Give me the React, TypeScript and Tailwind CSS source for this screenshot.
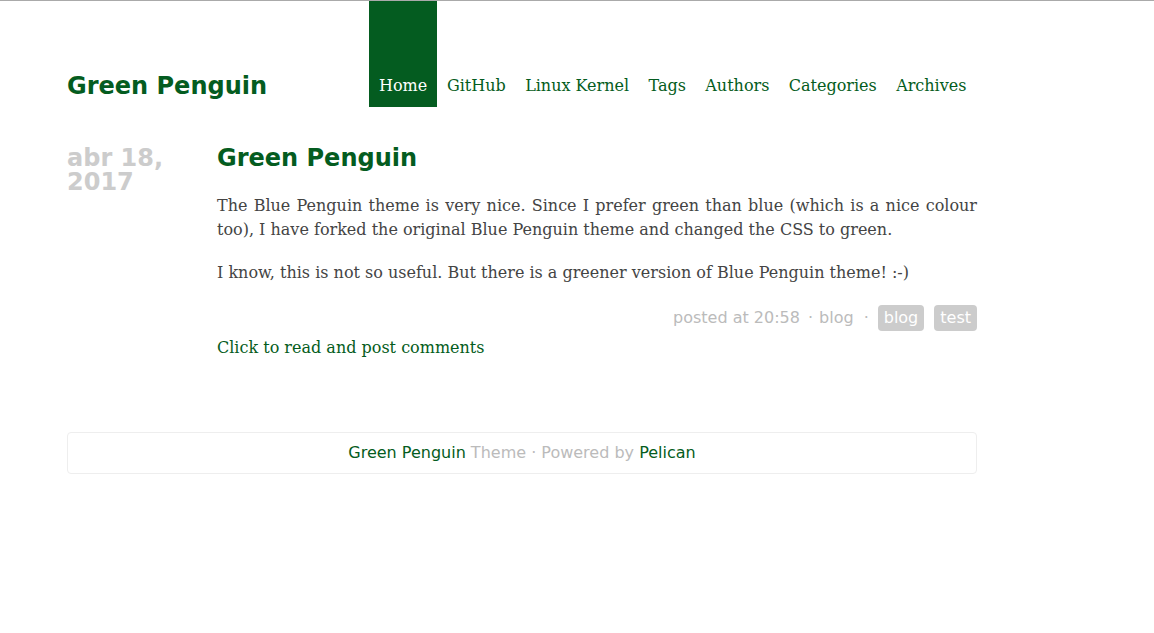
import React from "react";

const green = "text-[#045c20]";

export default function App() {
  const nav = ["GitHub", "Linux Kernel", "Tags", "Authors", "Categories", "Archives"];
  return (
    <div className="min-h-[633px] bg-white border-t border-[#aaaaaa]">
      <div className="ml-[67px] w-[910px]">
        <header className="flex items-end h-[106px]">
          <div className="w-[302px] shrink-0 pb-[6px]">
            <a className={`${green} text-[24px] font-bold leading-[30px] font-['DejaVu_Sans',sans-serif] whitespace-nowrap`}>Green Penguin</a>
          </div>
          <ul className="flex h-full font-['DejaVu_Serif',serif] text-[16px] whitespace-nowrap">
            <li className="h-full">
              <a className="flex h-full items-end px-[10px] pb-[11px] bg-[#045c20] text-white leading-[20px]">Home</a>
            </li>
            {nav.map((n) => (
              <li key={n} className="h-full">
                <a className={`flex h-full items-end px-[9.7px] pb-[11px] ${green} leading-[20px]`}>{n}</a>
              </li>
            ))}
          </ul>
        </header>

        <div className="flex mt-[39px]">
          <div className="w-[150px] shrink-0 text-[24px] font-bold leading-[24px] text-[#cccccc] font-['DejaVu_Sans',sans-serif]">
            abr 18,
            <br />
            2017
          </div>
          <article className="w-[760px]">
            <h2 className={`${green} text-[24px] font-bold leading-[24px] font-['DejaVu_Sans',sans-serif]`}>Green Penguin</h2>
            <div className="font-['DejaVu_Serif',serif] text-[16px] leading-[24px] text-[#444444] text-justify">
              <p className="mt-[24px]">
                The Blue Penguin theme is very nice. Since I prefer green than blue (which is a nice colour too), I have forked the original Blue Penguin theme and changed the CSS to green.
              </p>
              <p className="mt-[19px]">
                I know, this is not so useful. But there is a greener version of Blue Penguin theme! :-)
              </p>
            </div>
            <div className="mt-[20px] flex justify-end items-center font-['DejaVu_Sans',sans-serif] text-[16px] text-[#bbbbbb] leading-[26px]">
              <span>posted at 20:58</span>
              <span className="ml-[8px]">·</span>
              <span className="ml-[6px]">blog</span>
              <span className="ml-[10px]">·</span>
              <span className="ml-[9px] bg-[#cccccc] text-white rounded-[4px] px-[6px] h-[26px]">blog</span>
              <span className="ml-[10px] bg-[#cccccc] text-white rounded-[4px] px-[6px] h-[26px]">test</span>
            </div>
            <a className={`block ${green} font-['DejaVu_Serif',serif] text-[16px] leading-[20px] mt-[7px]`}>
              Click to read and post comments
            </a>
          </article>
        </div>

        <footer className="mt-[74px] h-[42px] border border-[#eeeeee] rounded-[4px] flex items-center justify-center font-['DejaVu_Sans',sans-serif] text-[16px] text-[#bbbbbb]">
          <span>
            <a className={green}>Green Penguin</a> Theme · Powered by <a className={green}>Pelican</a>
          </span>
        </footer>
      </div>
    </div>
  );
}
